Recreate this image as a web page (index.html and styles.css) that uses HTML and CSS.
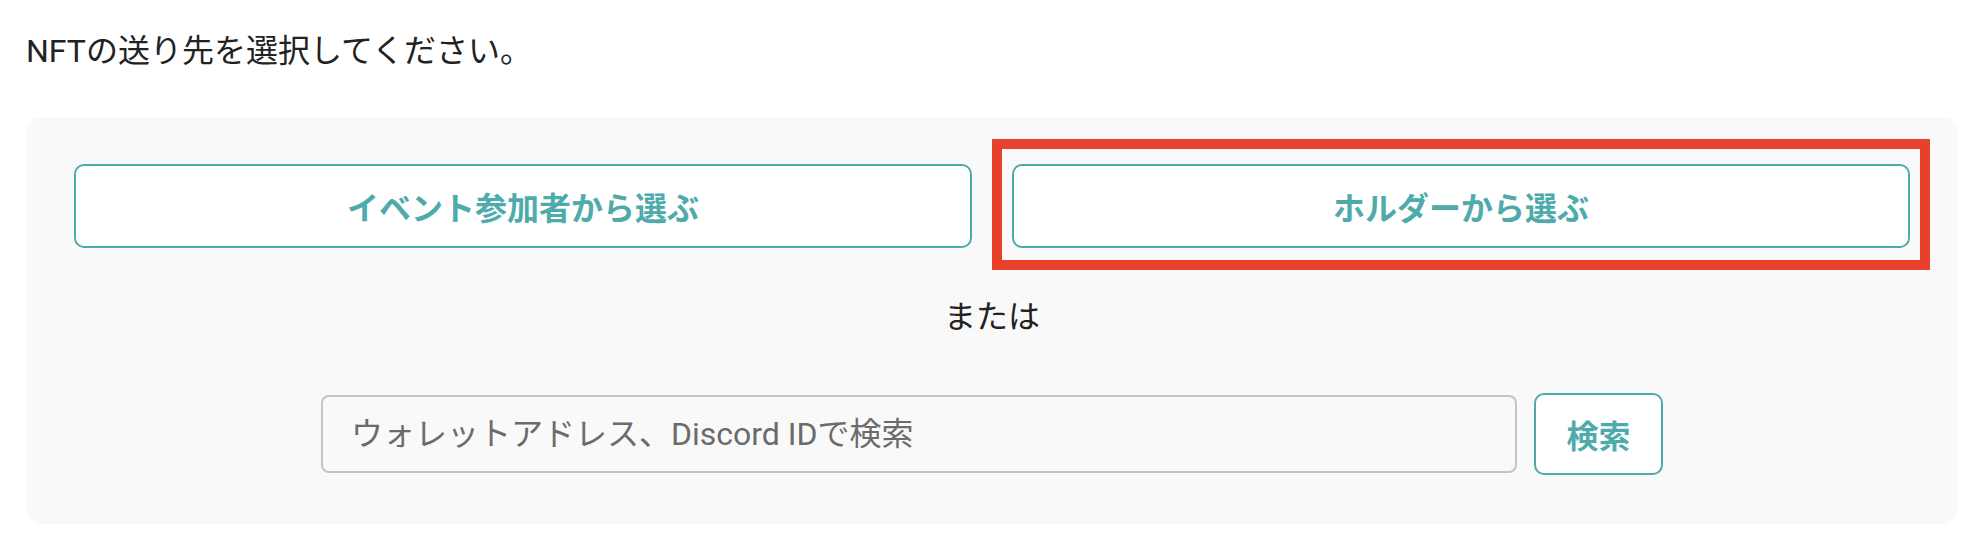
FILE: index.html
```html
<!DOCTYPE html>
<html>
  <head>
    <meta charset="UTF-8" />
    <title>NFTの送り先</title>
    <link rel="stylesheet" href="styles.css">
  </head>
  <body>
    <div class="page">
      <p class="lead">NFTの送り先を選択してください。</p>
      <div class="panel">
        <div class="choices">
          <button class="button">イベント参加者から選ぶ</button>
          <div class="highlight-wrap">
            <button class="button">ホルダーから選ぶ</button>
            <div class="highlight"></div>
          </div>
        </div>
        <div class="or">または</div>
        <div class="search">
          <input class="search-input" type="text" placeholder="ウォレットアドレス、Discord IDで検索" />
          <button class="button search-button">検索</button>
        </div>
      </div>
    </div>
  </body>
</html>
```
FILE: styles.css
```css
body {
  font-family: Roboto, "Noto Sans CJK JP", sans-serif;
  margin: 0;
  padding: 0;
  background-color: #fff;
  color: #222;
}
.page {
  padding: 27px 22px 0 26px;
}
.lead {
  font-size: 32px;
  line-height: 48px;
  margin: 0 0 42px 0;
}
.panel {
  background-color: #f9f9f9;
  border-radius: 16px;
  padding: 47px 48px 49px;
}
.choices {
  display: grid;
  grid-template-columns: 1fr 1fr;
  gap: 40px;
}
.highlight-wrap {
  position: relative;
  display: flex;
}
.highlight-wrap .button {
  flex: 1;
}
.highlight {
  position: absolute;
  top: -25px;
  left: -20px;
  right: -20px;
  bottom: -22px;
  border: 10px solid #e8402a;
  pointer-events: none;
}
.button {
  height: 84px;
  background-color: #fff;
  border: 2px solid #4fabab;
  border-radius: 10px;
  color: #4fabab;
  font-family: Roboto, "Noto Sans CJK JP", sans-serif;
  font-size: 32px;
  font-weight: bold;
  cursor: pointer;
}
.or {
  text-align: center;
  font-size: 32px;
  line-height: 48px;
  margin: 45px 0 52px;
}
.search {
  display: flex;
  justify-content: center;
  align-items: center;
  gap: 17px;
}
.search-input {
  width: 1196px;
  height: 78px;
  box-sizing: border-box;
  border: 2px solid #c4c4c4;
  border-radius: 8px;
  background-color: transparent;
  padding: 0 28px;
  font-family: Roboto, "Noto Sans CJK JP", sans-serif;
  font-size: 32px;
  color: #222;
}
.search-input::placeholder {
  color: #6b6b6b;
}
.search-button {
  width: 129px;
  height: 82px;
}
```
